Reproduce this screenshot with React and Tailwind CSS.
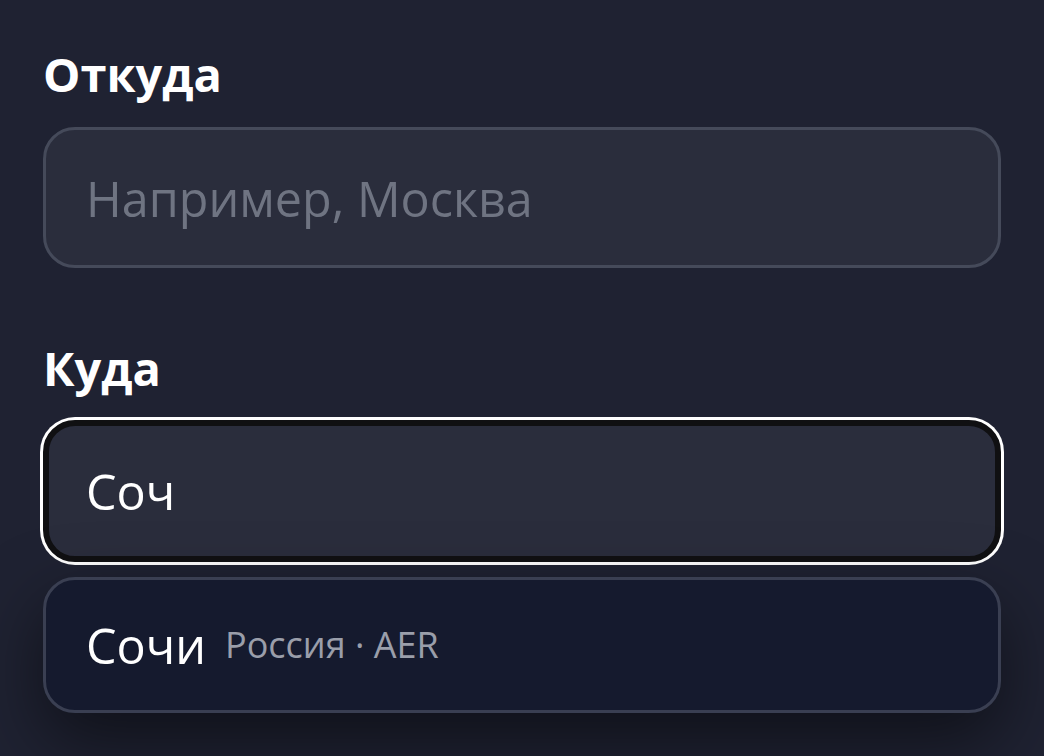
import React from "react";

export default function App() {
  return (
    <div
      className="min-h-screen w-full bg-[#1f2232] px-[43px] pt-[47px]"
      style={{ fontFamily: '"Open Sans", "Noto Sans", sans-serif' }}
    >
      <div className="w-[958px]">
        <label className="block text-[47px] font-bold leading-[55px] text-white">
          Откуда
        </label>
        <input
          type="text"
          placeholder="Например, Москва"
          className="mt-[25px] box-border block h-[141px] w-full rounded-[32px] border-[3px] border-[#454a5a] bg-[#2a2d3c] pl-[40px] text-[48.5px] text-white outline-none placeholder:text-[#6f7482]"
        />

        <label className="mt-[73px] block text-[47px] font-bold leading-[55px] text-white">
          Куда
        </label>
        <input
          type="text"
          defaultValue="Соч"
          className="mt-[24px] box-border block h-[142px] w-full rounded-[32px] border-[6px] border-[#101012] bg-[#2a2d3c] pl-[37px] text-[48.5px] text-white shadow-[0_0_0_3px_#ffffff] outline-none"
        />

        <div className="mt-[15px] flex h-[136px] w-full items-center rounded-[32px] border-[3px] border-[#3a3f52] bg-[#151a2e] pl-[40px] shadow-[0_28px_70px_rgba(0,0,0,0.5)]">
          <span className="text-[48.5px] leading-none text-white">Сочи</span>
          <span className="ml-[19px] text-[36px] leading-none text-[#9a9eaa]">
            Россия · AER
          </span>
        </div>
      </div>
    </div>
  );
}
